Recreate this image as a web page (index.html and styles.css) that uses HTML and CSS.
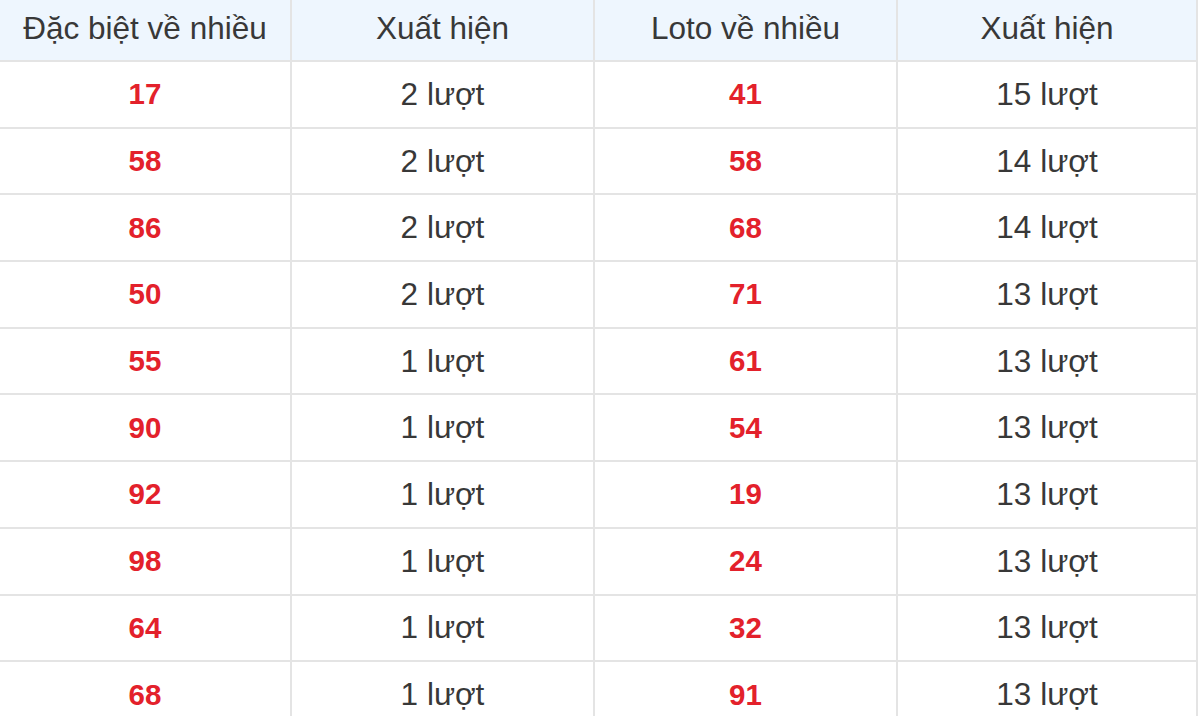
FILE: index.html
```html
<!DOCTYPE html>
<html lang="vi">
<head>
<meta charset="utf-8">
<title>Thống kê</title>
<link rel="stylesheet" href="styles.css">
</head>
<body>
<div class="frame">
  <div class="grid">
    <div class="cell head">Đặc biệt về nhiều</div>
    <div class="cell head">Xuất hiện</div>
    <div class="cell head">Loto về nhiều</div>
    <div class="cell head">Xuất hiện</div>

    <div class="cell num">17</div><div class="cell">2 lượt</div><div class="cell num">41</div><div class="cell">15 lượt</div>
    <div class="cell num">58</div><div class="cell">2 lượt</div><div class="cell num">58</div><div class="cell">14 lượt</div>
    <div class="cell num">86</div><div class="cell">2 lượt</div><div class="cell num">68</div><div class="cell">14 lượt</div>
    <div class="cell num">50</div><div class="cell">2 lượt</div><div class="cell num">71</div><div class="cell">13 lượt</div>
    <div class="cell num">55</div><div class="cell">1 lượt</div><div class="cell num">61</div><div class="cell">13 lượt</div>
    <div class="cell num">90</div><div class="cell">1 lượt</div><div class="cell num">54</div><div class="cell">13 lượt</div>
    <div class="cell num">92</div><div class="cell">1 lượt</div><div class="cell num">19</div><div class="cell">13 lượt</div>
    <div class="cell num">98</div><div class="cell">1 lượt</div><div class="cell num">24</div><div class="cell">13 lượt</div>
    <div class="cell num">64</div><div class="cell">1 lượt</div><div class="cell num">32</div><div class="cell">13 lượt</div>
    <div class="cell num">68</div><div class="cell">1 lượt</div><div class="cell num">91</div><div class="cell">13 lượt</div>
  </div>
</div>
</body>
</html>
```

FILE: styles.css
```css
html, body {
  margin: 0;
  padding: 0;
  background: #ffffff;
}

.frame {
  height: 716px;
  overflow: hidden;
}

.grid {
  display: grid;
  grid-template-columns: 292px 303px 303px 300px;
  grid-template-rows: 62px;
  grid-auto-rows: 66.7px;
  font-family: "Liberation Sans", Arial, sans-serif;
  font-size: 31.5px;
  color: #383838;
}

.cell {
  box-sizing: border-box;
  display: flex;
  align-items: center;
  justify-content: center;
  border-right: 2px solid #e4e4e4;
  border-bottom: 2px solid #e4e4e4;
  white-space: nowrap;
}

.head {
  background: #eef6fe;
  padding-bottom: 3px;
}

.num {
  color: #e3212b;
  font-weight: bold;
  font-size: 29.5px;
}
```
